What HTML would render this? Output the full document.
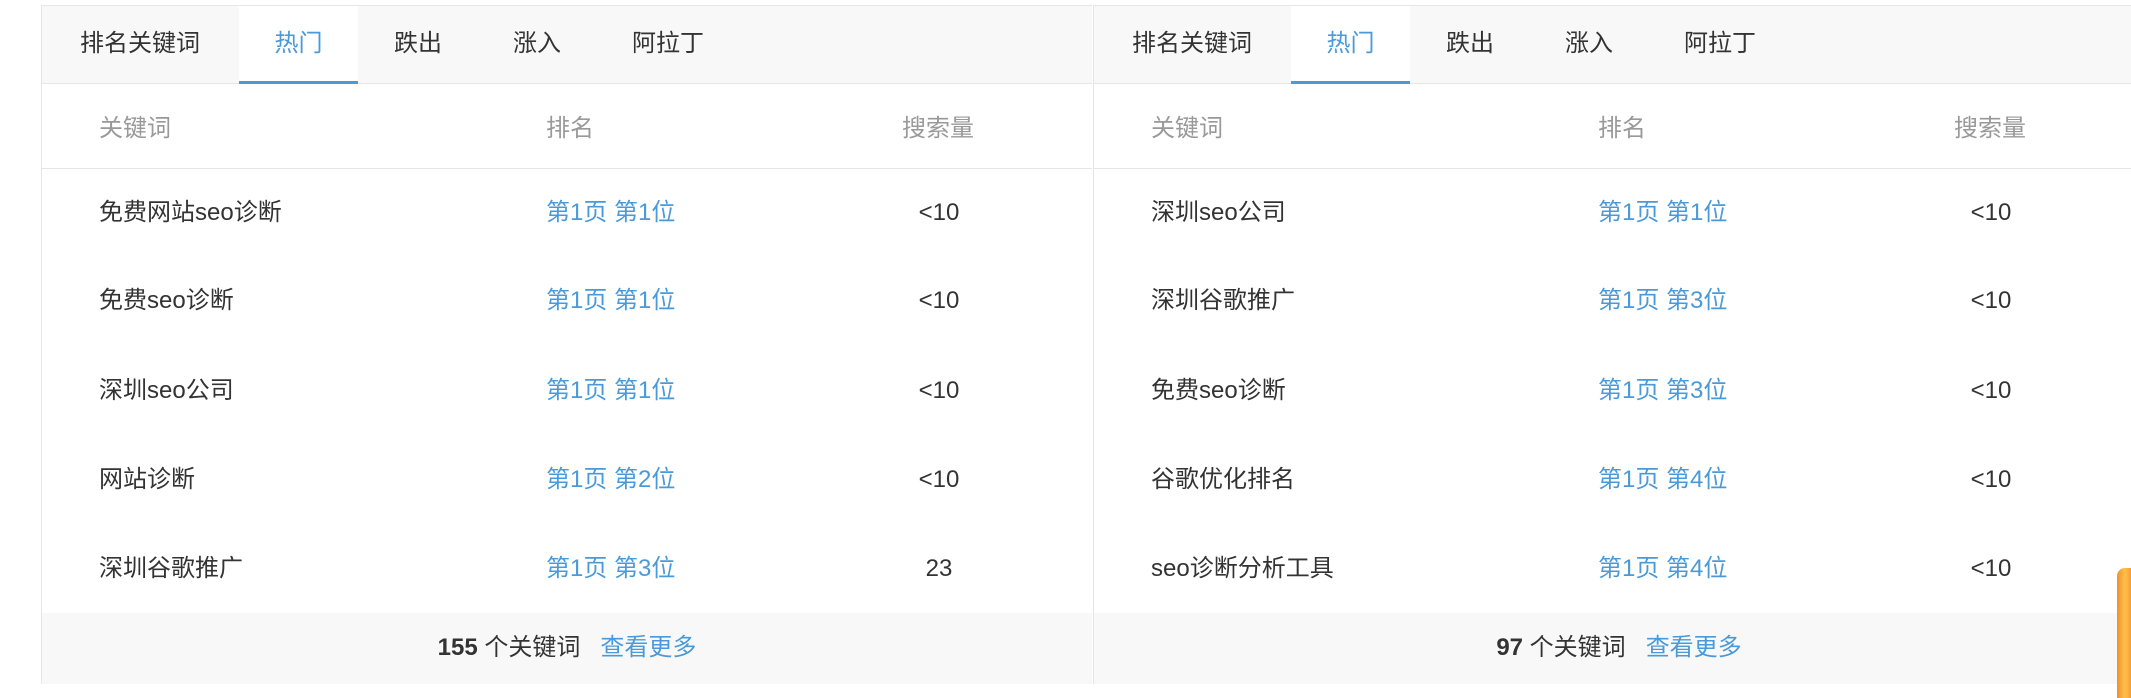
<!DOCTYPE html>
<html><head><meta charset="utf-8"><style>
*{margin:0;padding:0;box-sizing:border-box}
body{width:2131px;height:689px;background:#fff;position:relative;overflow:hidden;font-family:"Liberation Sans","Noto Sans CJK SC",sans-serif;font-size:24px;color:#333}
.p{position:absolute;top:5px;width:1051px;height:679px;border-left:1px solid #e6e6e6;border-top:1px solid #e6e6e6;border-bottom:1px solid #e6e6e6}
.tabs{position:absolute;left:0;top:0;width:100%;height:78px;background:#f8f8f8;border-bottom:1px solid #e6e6e6}
.tab{position:absolute;top:0;height:77px;line-height:76px}
.act{background:#fff;width:119px;text-align:center;color:#4a9ad9;border-bottom:3px solid #4a9ad9;height:78px}
.hd{position:absolute;top:78px;left:0;width:100%;height:85px;border-bottom:1px solid #e6e6e6;color:#999}
.c{position:absolute;line-height:30px}
.blue{color:#4a9ad9}
.ft{position:absolute;left:0;top:607px;width:100%;height:71px;background:#f8f8f8;line-height:70px;text-align:center}
</style></head><body>

<div class="p" style="left:41px">
<div class="tabs">
<div class="tab" style="left:38px">排名关键词</div>
<div class="tab act" style="left:197px">热门</div>
<div class="tab" style="left:352px">跌出</div>
<div class="tab" style="left:471px">涨入</div>
<div class="tab" style="left:590px">阿拉丁</div>
</div>
<div class="hd">
<div class="c" style="left:57px;top:30px">关键词</div>
<div class="c" style="left:504px;top:30px">排名</div>
<div class="c" style="left:860px;top:30px">搜索量</div>
</div>
<div class="c" style="left:57px;top:192px">免费网站seo诊断</div><div class="c blue" style="left:504px;top:192px">第1页 第1位</div><div class="c" style="left:897px;top:192px;width:0;white-space:nowrap"><span style="position:absolute;transform:translateX(-50%)">&lt;10</span></div>
<div class="c" style="left:57px;top:280px">免费seo诊断</div><div class="c blue" style="left:504px;top:280px">第1页 第1位</div><div class="c" style="left:897px;top:280px;width:0;white-space:nowrap"><span style="position:absolute;transform:translateX(-50%)">&lt;10</span></div>
<div class="c" style="left:57px;top:370px">深圳seo公司</div><div class="c blue" style="left:504px;top:370px">第1页 第1位</div><div class="c" style="left:897px;top:370px;width:0;white-space:nowrap"><span style="position:absolute;transform:translateX(-50%)">&lt;10</span></div>
<div class="c" style="left:57px;top:459px">网站诊断</div><div class="c blue" style="left:504px;top:459px">第1页 第2位</div><div class="c" style="left:897px;top:459px;width:0;white-space:nowrap"><span style="position:absolute;transform:translateX(-50%)">&lt;10</span></div>
<div class="c" style="left:57px;top:548px">深圳谷歌推广</div><div class="c blue" style="left:504px;top:548px">第1页 第3位</div><div class="c" style="left:897px;top:548px;width:0;white-space:nowrap"><span style="position:absolute;transform:translateX(-50%)">23</span></div>
<div class="ft"><b>155</b> 个关键词 &nbsp; <span class="blue">查看更多</span></div>
</div>

<div class="p" style="left:1093px">
<div class="tabs">
<div class="tab" style="left:38px">排名关键词</div>
<div class="tab act" style="left:197px">热门</div>
<div class="tab" style="left:352px">跌出</div>
<div class="tab" style="left:471px">涨入</div>
<div class="tab" style="left:590px">阿拉丁</div>
</div>
<div class="hd">
<div class="c" style="left:57px;top:30px">关键词</div>
<div class="c" style="left:504px;top:30px">排名</div>
<div class="c" style="left:860px;top:30px">搜索量</div>
</div>
<div class="c" style="left:57px;top:192px">深圳seo公司</div><div class="c blue" style="left:504px;top:192px">第1页 第1位</div><div class="c" style="left:897px;top:192px;width:0;white-space:nowrap"><span style="position:absolute;transform:translateX(-50%)">&lt;10</span></div>
<div class="c" style="left:57px;top:280px">深圳谷歌推广</div><div class="c blue" style="left:504px;top:280px">第1页 第3位</div><div class="c" style="left:897px;top:280px;width:0;white-space:nowrap"><span style="position:absolute;transform:translateX(-50%)">&lt;10</span></div>
<div class="c" style="left:57px;top:370px">免费seo诊断</div><div class="c blue" style="left:504px;top:370px">第1页 第3位</div><div class="c" style="left:897px;top:370px;width:0;white-space:nowrap"><span style="position:absolute;transform:translateX(-50%)">&lt;10</span></div>
<div class="c" style="left:57px;top:459px">谷歌优化排名</div><div class="c blue" style="left:504px;top:459px">第1页 第4位</div><div class="c" style="left:897px;top:459px;width:0;white-space:nowrap"><span style="position:absolute;transform:translateX(-50%)">&lt;10</span></div>
<div class="c" style="left:57px;top:548px">seo诊断分析工具</div><div class="c blue" style="left:504px;top:548px">第1页 第4位</div><div class="c" style="left:897px;top:548px;width:0;white-space:nowrap"><span style="position:absolute;transform:translateX(-50%)">&lt;10</span></div>
<div class="ft"><b>97</b> 个关键词 &nbsp; <span class="blue">查看更多</span></div>
</div>

<div style="position:absolute;left:2117px;top:568px;width:20px;height:130px;border-radius:8px 0 0 0;background:linear-gradient(90deg,#f0902a,#ffc04a 40%,#f07a20)"></div>
</body></html>
